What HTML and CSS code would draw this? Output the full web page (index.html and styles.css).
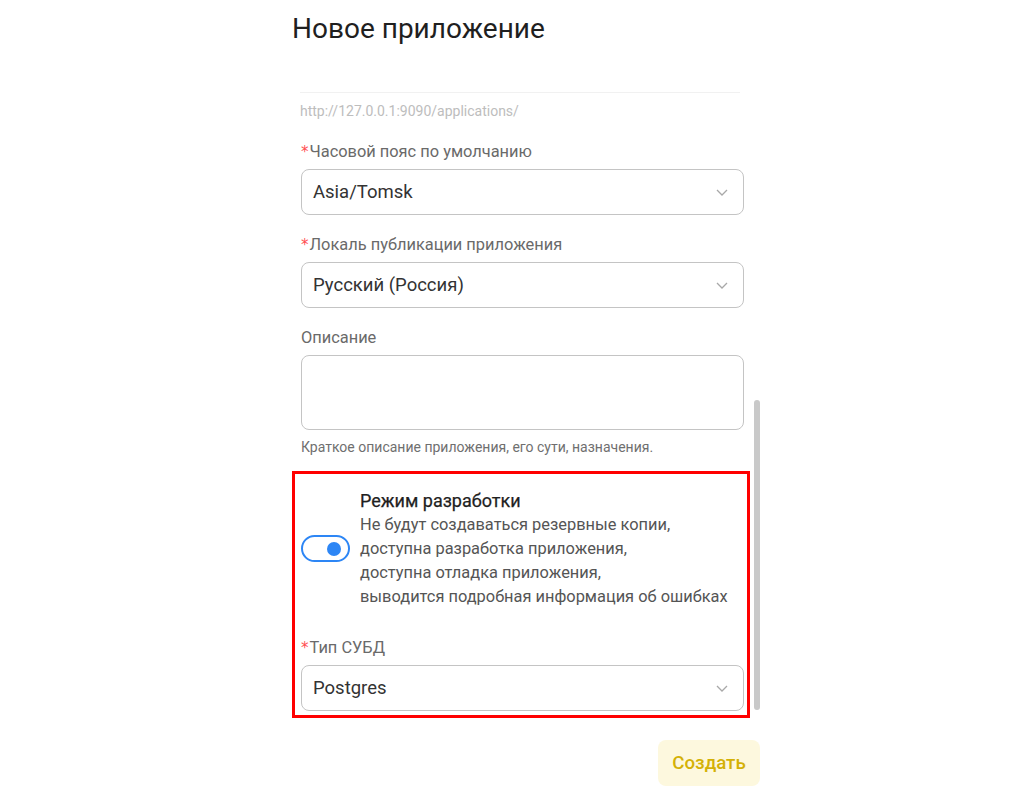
FILE: index.html
```html
<!DOCTYPE html>
<html lang="ru">
<head>
<meta charset="utf-8">
<title>Новое приложение</title>
<link rel="stylesheet" href="styles.css">
</head>
<body>
<div class="page">
  <h1 class="title">Новое приложение</h1>
  <div class="scroll-area">
    <div class="form">
      <div class="divider"></div>
      <div class="url-hint">http://127.0.0.1:9090/applications/</div>

      <div class="field">
        <div class="label"><span class="req">*</span>Часовой пояс по умолчанию</div>
        <div class="select">
          <span class="value">Asia/Tomsk</span>
          <svg class="chev" width="12" height="7" viewBox="0 0 12 7"><path d="M1 1l5 5 5-5" fill="none" stroke="#a8a8a8" stroke-width="1.3"/></svg>
        </div>
      </div>

      <div class="field">
        <div class="label"><span class="req">*</span>Локаль публикации приложения</div>
        <div class="select">
          <span class="value">Русский (Россия)</span>
          <svg class="chev" width="12" height="7" viewBox="0 0 12 7"><path d="M1 1l5 5 5-5" fill="none" stroke="#a8a8a8" stroke-width="1.3"/></svg>
        </div>
      </div>

      <div class="field field-desc">
        <div class="label">Описание</div>
        <div class="textarea"></div>
        <div class="help">Краткое описание приложения, его сути, назначения.</div>
      </div>

      <div class="highlight">
        <div class="dev-mode">
          <div class="toggle"><span class="knob"></span></div>
          <div class="dev-text">
            <div class="dev-title">Режим разработки</div>
            <div class="dev-desc">Не будут создаваться резервные копии,<br>доступна разработка приложения,<br>доступна отладка приложения,<br>выводится подробная информация об ошибках</div>
          </div>
        </div>
        <div class="field field-db">
          <div class="label"><span class="req">*</span>Тип СУБД</div>
          <div class="select">
            <span class="value">Postgres</span>
            <svg class="chev" width="12" height="7" viewBox="0 0 12 7"><path d="M1 1l5 5 5-5" fill="none" stroke="#a8a8a8" stroke-width="1.3"/></svg>
          </div>
        </div>
      </div>
    </div>
    <div class="scrollbar"><div class="thumb"></div></div>
  </div>
  <div class="actions">
    <button class="btn-create">Создать</button>
  </div>
</div>
</body>
</html>
```

FILE: styles.css
```css
html, body {
  margin: 0;
  padding: 0;
  background: #ffffff;
}

body {
  font-family: Roboto, "Noto Sans", Arial, sans-serif;
  color: #333;
}

.page {
  width: 468px;
  padding: 13px 0 0 292px;
}

.title {
  margin: 0;
  font-size: 28px;
  line-height: 32px;
  font-weight: 400;
  color: #1f1f1f;
}

.scroll-area {
  display: flex;
  margin-top: 47px;
}

.form {
  width: 443px;
  padding: 0 6px 0 9px;
}

.scrollbar {
  width: 6px;
  margin-left: 4px;
  display: flex;
  flex-direction: column;
  justify-content: flex-end;
}

.thumb {
  height: 310px;
  margin-bottom: 8px;
  border-radius: 3px;
  background: #c9c9c9;
}

.divider {
  height: 1px;
  margin: 0 4px 0 -1px;
  background: #f1f1f1;
}

.url-hint {
  margin-top: 8px;
  font-size: 14px;
  line-height: 20px;
  color: #bdbdbd;
  margin-left: -1px;
}

.field {
  margin-top: 20px;
}

.field + .field {
  margin-top: 19px;
}

.label {
  font-size: 16.4px;
  line-height: 22px;
  color: #6a6a6a;
  margin-bottom: 6px;
}

.req {
  color: #ff4d4f;
  font-family: "DejaVu Sans", sans-serif;
  font-size: 15px;
  margin-right: 1px;
}

.select {
  height: 44px;
  border: 1px solid #c4c4c4;
  border-radius: 8px;
  display: flex;
  align-items: center;
  justify-content: space-between;
  padding: 0 15px 0 11px;
}

.value {
  font-size: 18.5px;
  color: #333;
}

.chev {
  display: block;
}

.textarea {
  height: 73px;
  border: 1px solid #c4c4c4;
  border-radius: 8px;
}

.help {
  margin-top: 8px;
  font-size: 14px;
  line-height: 18px;
  color: #6f6f6f;
}

.highlight {
  margin: 15px -6px 0 -9px;
  padding: 14px 3px 4px 6px;
  border: 3px solid #ff0000;
}

.dev-mode {
  display: flex;
  align-items: center;
  gap: 10px;
}

.toggle {
  box-sizing: border-box;
  width: 49px;
  height: 27px;
  border: 2px solid #2d86f5;
  border-radius: 14px;
  display: flex;
  align-items: center;
  justify-content: flex-end;
  padding-right: 7px;
  flex-shrink: 0;
}

.knob {
  width: 14px;
  height: 14px;
  border-radius: 50%;
  background: #2d86f5;
}

.dev-title {
  font-size: 18px;
  line-height: 25px;
  font-weight: 400;
  color: #1f1f1f;
  -webkit-text-stroke: 0.25px #1f1f1f;
}

.dev-desc {
  font-size: 16.4px;
  line-height: 24px;
  color: #555;
}

.field-db {
  margin-top: 28px;
}

.actions {
  display: flex;
  justify-content: flex-end;
  margin-top: 22px;
}

.btn-create {
  width: 102px;
  height: 46px;
  border: none;
  border-radius: 8px;
  background: #fdf8de;
  color: #d4b106;
  font-family: Roboto, "Noto Sans", Arial, sans-serif;
  font-size: 18.7px;
  font-weight: 500;
  cursor: pointer;
}
```
